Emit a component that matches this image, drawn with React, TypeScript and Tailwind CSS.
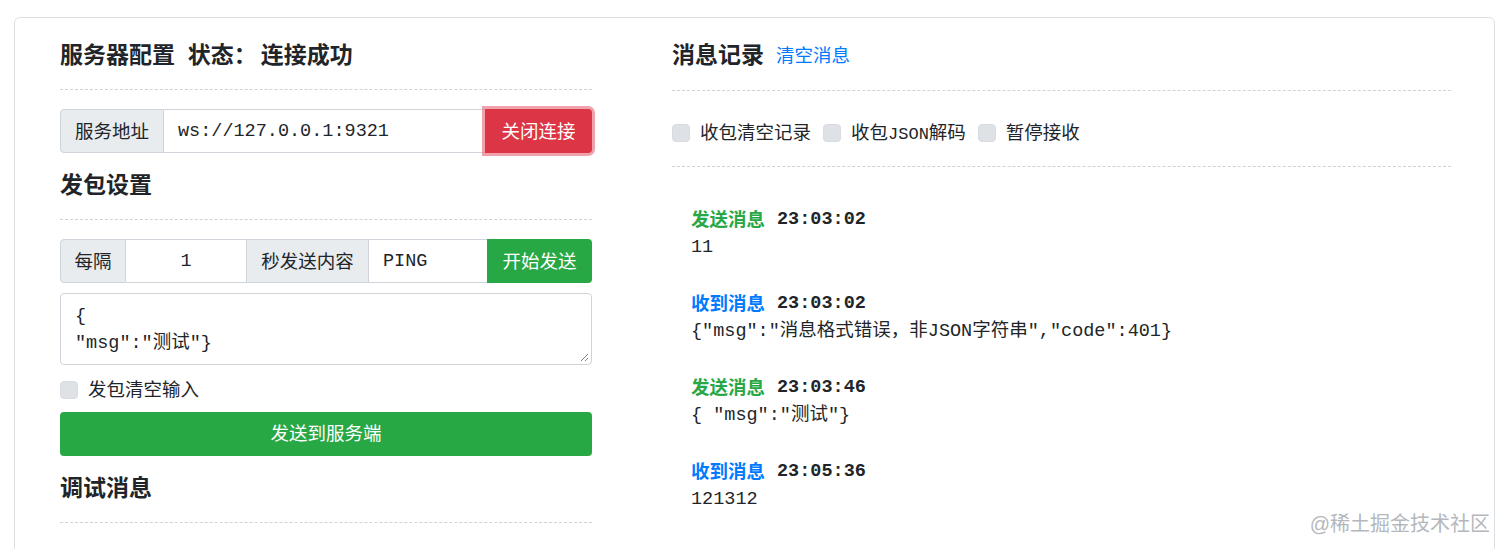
import React from "react";

const cjk = "font-['Helvetica_Neue','Liberation_Sans','Noto_Sans_CJK_SC',sans-serif]";
const mono = "font-['Liberation_Mono','Noto_Sans_CJK_SC',monospace]";

const Check: React.FC<{ label: React.ReactNode }> = ({ label }) => (
  <label className="flex items-center gap-[10px]">
    <span className="w-[18px] h-[18px] rounded-[4px] bg-[#dee2e6] border border-[#d8dce0]" />
    <span>{label}</span>
  </label>
);

const messages = [
  { kind: "send", time: "23:03:02", body: "11" },
  { kind: "recv", time: "23:03:02", body: "{\"msg\":\"消息格式错误，非JSON字符串\",\"code\":401}" },
  { kind: "send", time: "23:03:46", body: "{ \"msg\":\"测试\"}" },
  { kind: "recv", time: "23:05:36", body: "121312" },
];

export default function App() {
  return (
    <div className={`relative w-[1512px] h-[549px] overflow-hidden bg-white text-[#212529] ${cjk}`}>
      <div className="mt-[17px] ml-[14px] w-[1481px] h-[560px] border border-[#dcdfe3] rounded-[6px] flex pl-[45px] pr-[43px]">
        {/* left */}
        <div className="w-[532px] flex flex-col">
          <h2 className="mt-[22px] h-[30px] leading-[30px] text-[23px] font-bold whitespace-pre">
            服务器配置  状态<span className="inline-block w-[27px]">：</span>连接成功
          </h2>
          <div className="mt-[19px] border-t border-dashed border-[#cfd3d7]" />
          <div className="mt-[19px] flex h-[44px] text-[18.5px]">
            <span className="w-[104px] flex items-center justify-center bg-[#e9ecef] border border-[#ced4da] rounded-l-[4px] pt-[2px]">服务地址</span>
            <span className={`flex-1 flex items-center pl-[14px] border-y border-[#ced4da] pt-[2px] ${mono}`}>ws://127.0.0.1:9321</span>
            <button className="w-[107px] bg-[#dc3545] text-white rounded-r-[4px] ring-[3px] ring-[#e97b86]/70 pt-[2px]">关闭连接</button>
          </div>
          <h2 className="mt-[17px] h-[30px] leading-[30px] text-[23px] font-bold">发包设置</h2>
          <div className="mt-[19px] border-t border-dashed border-[#cfd3d7]" />
          <div className="mt-[19px] flex h-[44px] text-[18.5px]">
            <span className="w-[66px] flex items-center justify-center bg-[#e9ecef] border border-[#ced4da] rounded-l-[4px] pt-[2px]">每隔</span>
            <span className={`w-[120px] flex items-center justify-center border-y border-[#ced4da] pt-[2px] ${mono}`}>1</span>
            <span className="w-[123px] flex items-center justify-center bg-[#e9ecef] border border-[#ced4da] pt-[2px]">秒发送内容</span>
            <span className={`w-[118px] flex items-center pl-[14px] border-y border-[#ced4da] pt-[2px] ${mono}`}>PING</span>
            <button className="flex-1 bg-[#28a745] text-white rounded-r-[4px] pt-[2px]">开始发送</button>
          </div>
          <div className={`relative mt-[10px] h-[72px] border border-[#ced4da] rounded-[4px] px-[14px] pt-[9px] text-[18.5px] leading-[27px] ${mono}`}>
            <div>{"{"}</div>
            <div>"msg":"测试"{"}"}</div>
            <svg className="absolute right-[2px] bottom-[2px]" width="9" height="9" viewBox="0 0 9 9">
              <path d="M8 1L1 8M8 5L5 8" stroke="#888" strokeWidth="1" />
            </svg>
          </div>
          <div className="mt-[11px] h-[24px] text-[18.5px]">
            <Check label="发包清空输入" />
          </div>
          <button className="mt-[12px] h-[44px] rounded-[4px] bg-[#28a745] text-white text-[18.5px]">发送到服务端</button>
          <h2 className="mt-[17px] h-[30px] leading-[30px] text-[23px] font-bold">调试消息</h2>
          <div className="mt-[19px] border-t border-dashed border-[#cfd3d7]" />
        </div>
        {/* right */}
        <div className="ml-[80px] flex-1 flex flex-col">
          <div className="mt-[22px] h-[30px] flex items-center gap-[12px]">
            <h2 className="text-[23px] font-bold">消息记录</h2>
            <span className="text-[18.5px] text-[#007bff] mt-[2px]">清空消息</span>
          </div>
          <div className="mt-[20px] border-t border-dashed border-[#cfd3d7]" />
          <div className="mt-[30px] h-[24px] flex items-center gap-[12px] text-[18.5px]">
            <Check label="收包清空记录" />
            <Check label={<>收包<span className={`text-[17px] ${mono}`}>JSON</span>解码</>} />
            <Check label="暂停接收" />
          </div>
          <div className="mt-[21px] border-t border-dashed border-[#cfd3d7]" />
          <div className="mt-[39px] pl-[19px] flex flex-col gap-[28px]">
            {messages.map((m, i) => (
              <div key={i}>
                <div className="h-[28px] flex items-center gap-[12px]">
                  <span className={`text-[18.5px] font-bold ${m.kind === "send" ? "text-[#28a745]" : "text-[#007bff]"}`}>
                    {m.kind === "send" ? "发送消息" : "收到消息"}
                  </span>
                  <span className={`text-[18.5px] font-bold ${mono}`}>{m.time}</span>
                </div>
                <div className={`h-[28px] flex items-center text-[18.5px] ${mono}`}>{m.body}</div>
              </div>
            ))}
          </div>
        </div>
      </div>
      <div className="absolute right-[22px] top-[509px] text-[20px] text-[#b4b8bc]">@稀土掘金技术社区</div>
    </div>
  );
}
